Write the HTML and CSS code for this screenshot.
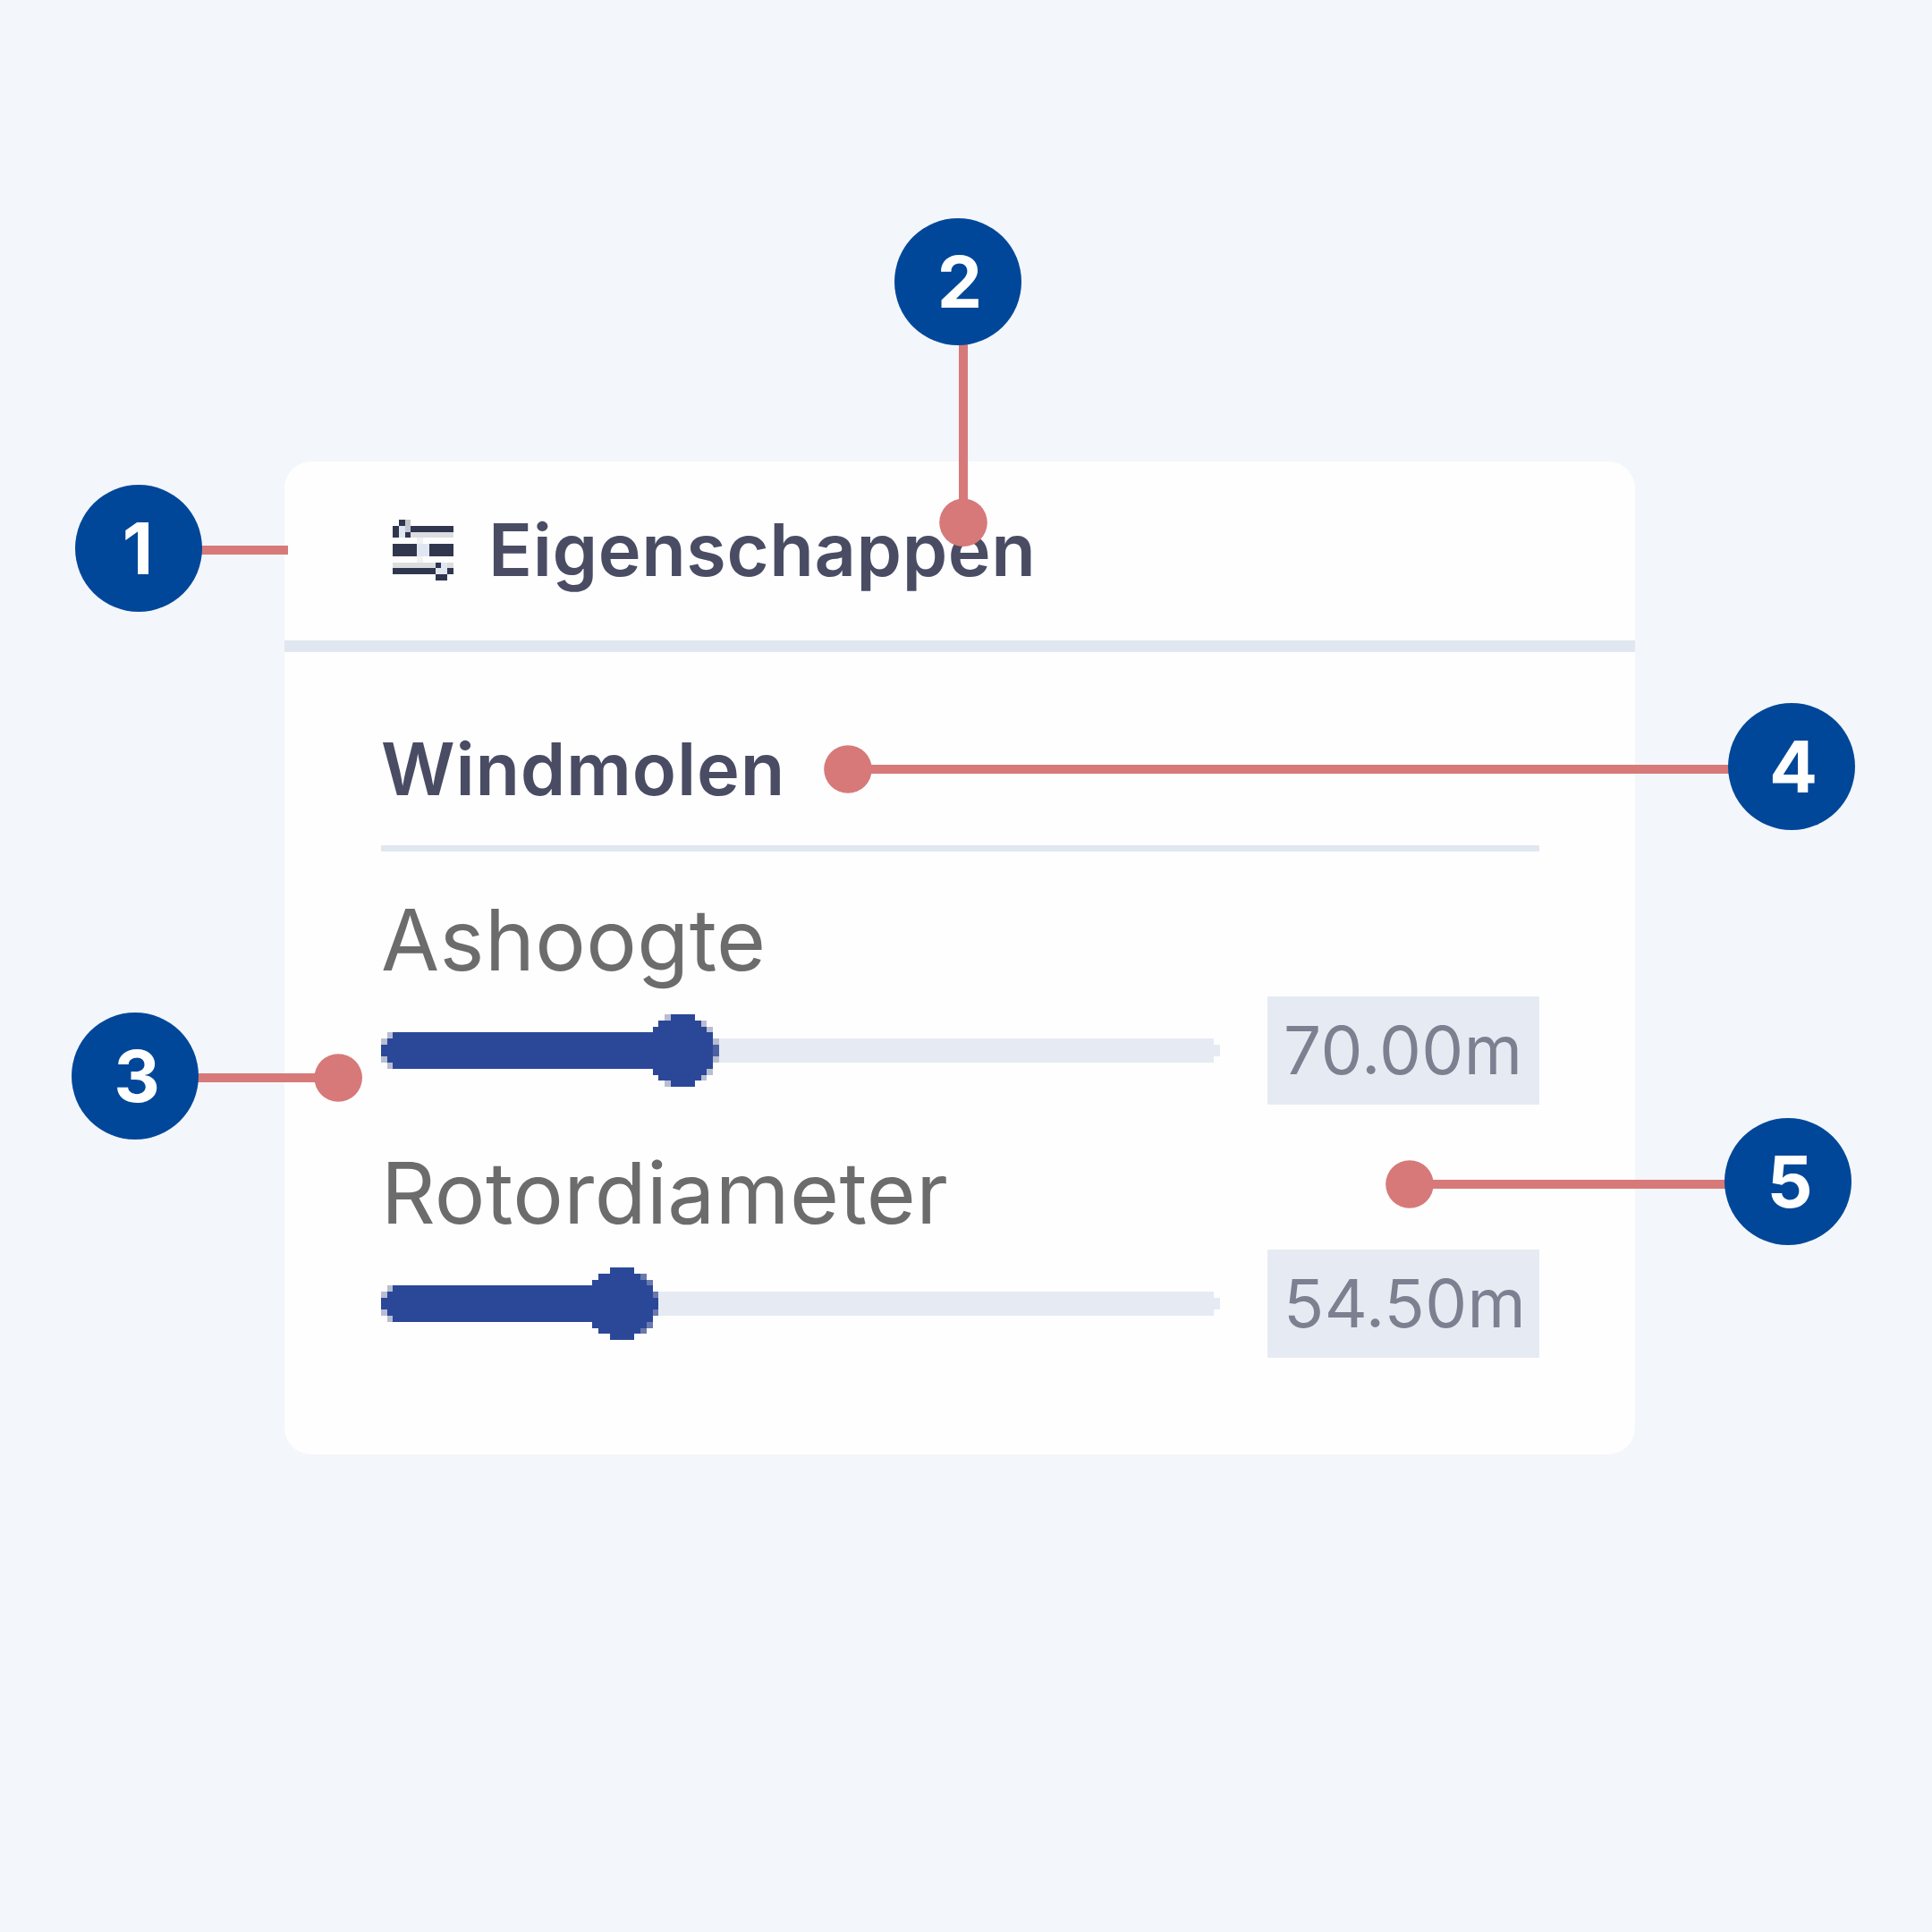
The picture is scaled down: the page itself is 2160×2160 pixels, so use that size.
FILE: index.html
```
<!DOCTYPE html>
<html lang="nl">
<head>
<meta charset="utf-8">
<title>Eigenschappen</title>
<link rel="stylesheet" href="styles.css">
</head>
<body>
<main class="canvas">
  <section class="panel">
    <header class="panel-header">
      <svg class="icon" viewBox="0 0 10 10" shape-rendering="crispEdges" aria-hidden="true">
        <path fill="#dcdde0" d="M3 2h7v1H3zM0 7h7v1H0zM9 7h1v1H9z"/>
        <path fill="#f2f2f4" d="M4 3h1v1H4zM4 6h1v1H4z"/>
        <path fill="#c4c5c9" d="M2 0h1v1H2z"/>
        <path fill="#c3c9d8" d="M2 1h1v1H2z"/>
        <path fill="#e0e7f2" d="M1 1h1v2H1zM4 4h2v2H4zM8 7h1v1H8zM7 8h2v1H7z"/>
        <path fill="#31364f" d="M1 0h1v1H1zM0 1h1v2H0zM3 1h7v1H3zM2 2h1v1H2zM0 4h4v2H0zM6 4h4v2H6zM7 7h1v1H7zM0 8h7v1H0zM9 8h1v1H9zM7 9h2v1H7z"/>
      </svg>
      <h1 class="title">Eigenschappen</h1>
    </header>
    <div class="panel-body">
      <h2 class="group">Windmolen</h2>
      <div class="field">
        <div class="label">Ashoogte</div>
        <div class="control">
          <svg class="slider" viewBox="0 0 139 12" preserveAspectRatio="none" shape-rendering="crispEdges" aria-hidden="true">
            <path fill="#e6ebf3" d="M50 4h88v1h1v2h-1v1H50z"/>
            <path fill="#b9bdd3" d="M1 3h1v1H1zM0 4h1v1H0zM0 7h1v1H0zM1 8h1v1H1zM47 0h1v1h-1zM53 1h1v1h-1zM54 2h1v1h-1zM55 4h1v1h-1zM55 7h1v1h-1zM54 9h1v1h-1zM53 10h1v1h-1zM47 11h1v1h-1z"/>
            <path fill="#2b4898" d="M0 5h1V4h1V3h43V2h1V1h2V0h4v1h1v1h1v1h1v6h-1v1h-1v1h-1v1h-4v-1h-2v-1h-1V9H2V8H1V7H0z"/>
            <path fill="#4d60a1" d="M55 5h1v2h-1z"/>
          </svg>
          <output class="value">70.00m</output>
        </div>
      </div>
      <div class="field">
        <div class="label">Rotordiameter</div>
        <div class="control">
          <svg class="slider" viewBox="0 0 139 12" preserveAspectRatio="none" shape-rendering="crispEdges" aria-hidden="true">
            <path fill="#e6ebf3" d="M40 4h98v1h1v2h-1v1H40z"/>
            <path fill="#b9bdd3" d="M1 3h1v1H1zM0 4h1v1H0zM0 7h1v1H0zM1 8h1v1H1z"/>
            <path fill="#6a78ad" d="M43 1h1v1h-1zM44 2h1v1h-1zM45 4h1v1h-1zM45 7h1v1h-1zM44 9h1v1h-1zM43 10h1v1h-1z"/>
            <path fill="#2b4898" d="M0 5h1V4h1V3h33V2h1V1h2V0h4v1h1v1h1v1h1v2h1v2h-1v2h-1v1h-1v1h-1v1h-4v-1h-2v-1h-1V9H2V8H1V7H0z"/>
          </svg>
          <output class="value">54.50m</output>
        </div>
      </div>
    </div>
  </section>

  <svg class="leaders" viewBox="0 0 2160 2160" aria-hidden="true">
    <g fill="#d77979">
      <path d="M220 610h102v10H220zM1072 380h10v200h-10zM216 1200h160v10H216zM948 855h990v10H948zM1576 1319h358v10h-358z"/>
      <circle cx="1077" cy="584.2" r="26.8"/>
      <circle cx="378.2" cy="1205" r="26.8"/>
      <circle cx="948" cy="860" r="26.8"/>
      <circle cx="1576" cy="1324" r="26.8"/>
    </g>
  </svg>
  <span class="marker m1">1</span>
  <span class="marker m2">2</span>
  <span class="marker m3">3</span>
  <span class="marker m4">4</span>
  <span class="marker m5">5</span>
</main>
</body>
</html>
```
FILE: styles.css
```
* { box-sizing: border-box; }

body {
  margin: 0;
  background: #f3f6fb;
  font-family: Inter, "Liberation Sans", sans-serif;
}

.canvas {
  position: relative;
  width: 2160px;
  height: 2160px;
  padding: 516px 332px 0 318px;
  overflow: hidden;
}

.panel {
  height: 1110px;
  background: #fefefe;
  border-radius: 30px;
}

.panel-header {
  display: flex;
  align-items: center;
  gap: 39px;
  height: 213px;
  padding: 0 0 3px 121px;
  border-bottom: 13px solid #e0e7f1;
}

.icon {
  flex: none;
  width: 68px;
  height: 68px;
}

.title {
  margin: 0;
  font-size: 81px;
  line-height: 100px;
  font-weight: 600;
  letter-spacing: 0.6px;
  color: #4a4c64;
}

.panel-body {
  display: flex;
  flex-direction: column;
  gap: 35px;
  padding: 44px 107px 0 108px;
}

.group {
  height: 179px;
  margin: 0;
  border-bottom: 7px solid #e0e7f1;
  font-size: 81px;
  line-height: 174px;
  font-weight: 600;
  letter-spacing: 0.8px;
  color: #4a4c64;
}

.label {
  height: 127px;
  font-size: 94.5px;
  line-height: 127px;
  letter-spacing: 0.4px;
  color: #6c6c6c;
}

.control {
  display: flex;
  align-items: center;
  justify-content: space-between;
  height: 121px;
}

.slider {
  width: 938px;
  height: 81px;
}

.value {
  width: 304px;
  height: 121px;
  padding-left: 18px;
  background: #e6ebf3;
  font-size: 74.5px;
  line-height: 121px;
  letter-spacing: 0.4px;
  color: #7d8090;
}

.leaders {
  position: absolute;
  inset: 0;
  width: 2160px;
  height: 2160px;
}

.marker {
  position: absolute;
  width: 142px;
  height: 142px;
  padding-left: 4px;
  border-radius: 50%;
  background: #004799;
  color: #fff;
  font-size: 80px;
  line-height: 142px;
  font-weight: 700;
  text-align: center;
}

.m1 { left: 84px; top: 542px; padding: 0 2px 0 0; }
.m2 { left: 1000px; top: 244px; }
.m3 { left: 80px; top: 1132px; }
.m4 { left: 1932px; top: 786px; }
.m5 { left: 1928px; top: 1250px; }
```
